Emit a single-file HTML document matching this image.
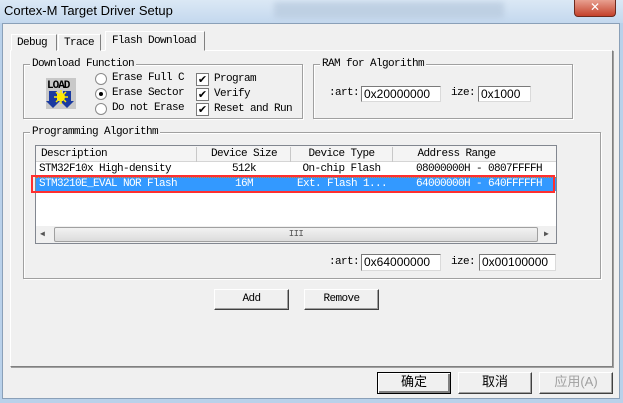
<!DOCTYPE html>
<html><head><meta charset="utf-8"><style>
*{box-sizing:border-box;margin:0;padding:0}
body{width:623px;height:403px;overflow:hidden;background:#b9d1ea;position:relative;font-family:"Liberation Mono",monospace;font-size:11px;letter-spacing:-0.6px;color:#000}
.a{position:absolute}
.title{left:0;top:0;width:623px;height:23px;background:linear-gradient(#dbe8f5,#c4d8ee)}
.client{left:2px;top:23px;width:618px;height:376px;background:#f0f0f0;border:1px solid #8aa0b8}
.grp{position:absolute;border:1px solid #a0a0a0;box-shadow:inset 1px 1px 0 #fff,1px 1px 0 #fff}
.gl{position:absolute;background:#f0f0f0;padding:0 2px;top:-8px;left:6px;line-height:14px}
.edit{position:absolute;background:#fff;border:1px solid #7a7a7a;border-right-color:#dadada;border-bottom-color:#dadada;font-family:"Liberation Sans",sans-serif;font-size:12px;letter-spacing:0;line-height:14px;padding-left:2px}
.btn{position:absolute;background:#f0f0f0;border:1px solid;border-color:#fff #404040 #404040 #fff;box-shadow:inset -1px -1px 0 #a0a0a0;text-align:center;line-height:18px}
.tab{position:absolute;border:1px solid;border-color:#fff #808080 transparent #fff;background:#f0f0f0;line-height:16px;padding-left:5px}
.rad{position:absolute;width:12px;height:12px;border-radius:50%;border:1px solid #8a8a8a;background:#fff}
.chk{position:absolute;width:13px;height:13px;border:1px solid #7a7a7a;background:#fff;font-size:11px;line-height:11px;text-align:center;font-family:"DejaVu Sans",sans-serif;letter-spacing:0}
.cj{font-family:"Liberation Sans","Noto Sans CJK SC",sans-serif;font-size:13px;letter-spacing:0}
</style></head><body>
<div class="a title"></div>
<div class="a" style="left:4px;top:3px;font-family:'Liberation Sans',sans-serif;font-size:13px;letter-spacing:0;color:#000">Cortex-M Target Driver Setup</div>
<div class="a" style="left:274px;top:2px;width:230px;height:16px;background:#b7c9dd;filter:blur(3px);opacity:.7"></div>
<div class="a" style="left:574px;top:0;width:42px;height:17px;background:linear-gradient(#e8a090,#c4412b);border:1px solid #6d2a1e;border-top:none;border-radius:0 0 4px 4px;color:#fff;text-align:center;font-family:'DejaVu Sans';font-size:12px;font-weight:bold;letter-spacing:0;line-height:15px">✕</div>
<div class="a client"></div>

<div class="a" style="left:10px;top:50px;width:603px;height:317px;border:1px solid;border-color:#fff #808080 #808080 #fff;box-shadow:1px 1px 0 #a0a0a0"></div>
<div class="tab" style="left:11px;top:34px;width:46px;height:17px">Debug</div>
<div class="tab" style="left:58px;top:34px;width:43px;height:17px">Trace</div>
<div class="tab" style="left:105px;top:31px;width:100px;height:20px;border-bottom:1px solid #f0f0f0;line-height:18px;padding-left:6px">Flash Download</div>

<div class="grp" style="left:23px;top:64px;width:280px;height:55px"><span class="gl">Download Function</span></div>
<svg class="a" style="left:46px;top:78px" width="30" height="31" viewBox="0 0 30 31">
<rect width="30" height="31" fill="#c8c8c8"/>
<text x="1" y="10" font-family="Liberation Mono" font-weight="bold" font-size="11" fill="#000" letter-spacing="-1">LOAD</text>
<path d="M2 13h8v10h3l-7 7l-7-7h3z" fill="#1a3aa0" transform="translate(1,0)"/>
<path d="M18 13h8v10h3l-7 7l-7-7h3z" fill="#1a3aa0" transform="translate(-1,0)"/>
<circle cx="15" cy="19" r="4" fill="#ffea00"/>
<path d="M15 12v14M8 19h14M10 14l10 10M20 14l-10 10" stroke="#ffea00" stroke-width="1.5"/>
</svg>
<div class="rad" style="left:95px;top:73px"></div><div class="a" style="left:112px;top:72px">Erase Full C</div>
<div class="rad" style="left:95px;top:88px"><div style="position:absolute;left:3px;top:3px;width:4px;height:4px;border-radius:50%;background:#000"></div></div><div class="a" style="left:112px;top:87px">Erase Sector</div>
<div class="rad" style="left:95px;top:103px"></div><div class="a" style="left:112px;top:102px">Do not Erase</div>
<div class="chk" style="left:196px;top:73px">✔</div><div class="a" style="left:214px;top:73px">Program</div>
<div class="chk" style="left:196px;top:88px">✔</div><div class="a" style="left:214px;top:88px">Verify</div>
<div class="chk" style="left:196px;top:103px">✔</div><div class="a" style="left:214px;top:103px">Reset and Run</div>

<div class="grp" style="left:313px;top:64px;width:260px;height:55px"><span class="gl">RAM for Algorithm</span></div>
<div class="a" style="left:329px;top:87px">:art:</div>
<div class="edit" style="left:361px;top:86px;width:80px;height:16px">0x20000000</div>
<div class="a" style="left:451px;top:87px">ize:</div>
<div class="edit" style="left:478px;top:86px;width:53px;height:16px">0x1000</div>

<div class="grp" style="left:23px;top:132px;width:578px;height:147px"><span class="gl">Programming Algorithm</span></div>
<div class="a" style="left:35px;top:145px;width:522px;height:99px;background:#fff;border:1px solid #828790"></div>
<div class="a" style="left:36px;top:146px;width:520px;height:16px;background:#f4f4f4;border-bottom:1px solid #d5d5d5"></div>
<div class="a" style="left:41px;top:148px">Description</div>
<div class="a" style="left:196px;top:147px;width:1px;height:15px;background:#c8c8c8"></div>
<div class="a" style="left:197px;top:148px;width:94px;text-align:center">Device Size</div>
<div class="a" style="left:290px;top:147px;width:1px;height:15px;background:#c8c8c8"></div>
<div class="a" style="left:291px;top:148px;width:101px;text-align:center">Device Type</div>
<div class="a" style="left:392px;top:147px;width:1px;height:15px;background:#c8c8c8"></div>
<div class="a" style="left:393px;top:148px;width:127px;text-align:center">Address Range</div>
<div class="a" style="left:36px;top:163px;width:520px;height:12px;overflow:hidden">
<div class="a" style="left:3px;top:0">STM32F10x High-density</div>
<div class="a" style="left:161px;width:94px;text-align:center">512k</div>
<div class="a" style="left:255px;width:101px;text-align:center">On-chip Flash</div>
<div class="a" style="left:380px">08000000H - 0807FFFFH</div></div>
<div class="a" style="left:36px;top:177px;width:520px;height:14px;background:#3399ff;color:#fff;border-top:1px dotted #e07020">
<div class="a" style="left:3px;top:0">STM3210E_EVAL NOR Flash</div>
<div class="a" style="left:161px;width:94px;text-align:center">16M</div>
<div class="a" style="left:261px">Ext. Flash 1...</div>
<div class="a" style="left:380px">64000000H - 640FFFFFH</div></div>
<div class="a" style="left:31px;top:175px;width:524px;height:18px;border:2px solid #ff3030"></div>
<div class="a" style="left:36px;top:226px;width:520px;height:17px;background:#f0f0f0"></div>
<div class="a" style="left:54px;top:227px;width:484px;height:15px;background:linear-gradient(#f2f2f2,#dcdcdc);border:1px solid #a0a0a0;border-radius:2px;text-align:center;font-size:9px;line-height:12px;color:#555">III</div>
<div class="a" style="left:40px;top:229px;font-size:8px;color:#555">◀</div>
<div class="a" style="left:544px;top:229px;font-size:8px;color:#555">▶</div>

<div class="a" style="left:329px;top:256px">:art:</div>
<div class="edit" style="left:361px;top:254px;width:80px;height:17px">0x64000000</div>
<div class="a" style="left:451px;top:256px">ize:</div>
<div class="edit" style="left:479px;top:254px;width:77px;height:17px">0x00100000</div>

<div class="btn" style="left:214px;top:289px;width:75px;height:21px">Add</div>
<div class="btn" style="left:304px;top:289px;width:75px;height:21px">Remove</div>

<div class="btn cj" style="left:377px;top:372px;width:74px;height:22px;border-color:#000;box-shadow:inset 1px 1px 0 #fff,inset -2px -2px 0 #808080">确定</div>
<div class="btn cj" style="left:458px;top:372px;width:74px;height:22px">取消</div>
<div class="btn cj" style="left:539px;top:372px;width:74px;height:22px;color:#a0a0a0">应用(A)</div>
</body></html>
